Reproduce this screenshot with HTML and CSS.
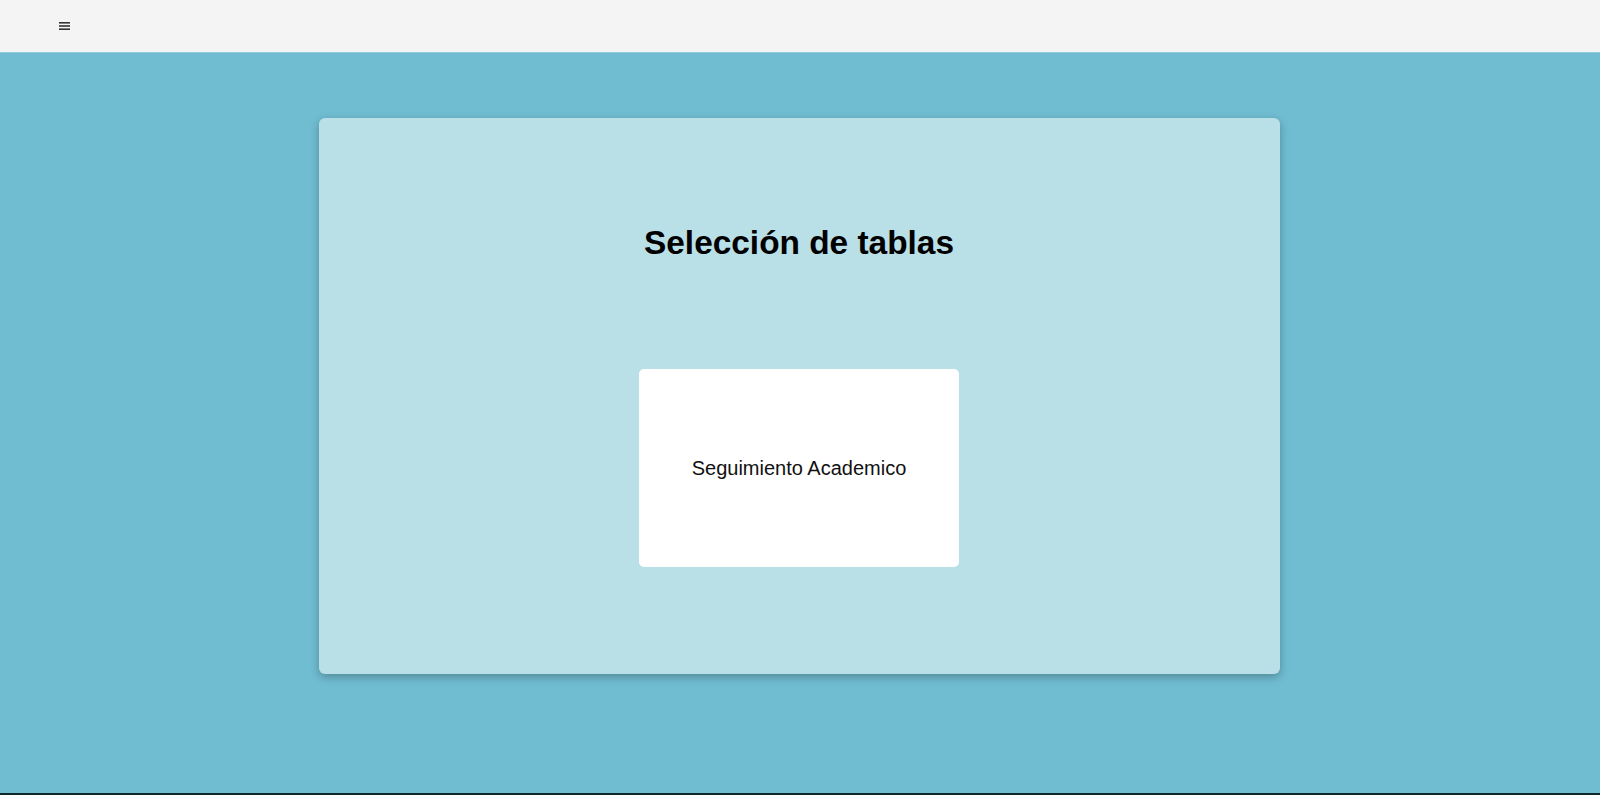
FILE: index.html
```html
<!DOCTYPE html>
<html lang="es">
<head>
<meta charset="utf-8">
<title>Selección de tablas</title>
<link rel="stylesheet" href="styles.css">
</head>
<body>
<div class="page">
  <header class="topbar">
    <button class="menu-btn" aria-label="Menú">
      <svg width="12" height="10" viewBox="0 0 12 10"><rect x="0" y="1" width="11" height="1.6" fill="#333"/><rect x="0" y="4.2" width="11" height="1.6" fill="#333"/><rect x="0" y="7.4" width="11" height="1.6" fill="#333"/></svg>
    </button>
  </header>
  <main class="main">
    <section class="panel">
      <h1 class="panel-title">Selección de tablas</h1>
      <div class="tiles">
        <a class="tile" href="#">Seguimiento Academico</a>
      </div>
    </section>
  </main>
  <div class="taskbar"></div>
</div>
</body>
</html>
```

FILE: styles.css
```css
* { box-sizing: border-box; }
html, body {
  margin: 0;
  padding: 0;
  height: 100%;
  font-family: "Liberation Sans", Arial, sans-serif;
}
.page {
  display: flex;
  flex-direction: column;
  height: 795px;
  background: #70bdd2;
}
.topbar {
  height: 53px;
  background: #f4f4f4;
  display: flex;
  align-items: center;
  padding-left: 59px;
  border-bottom: 1px solid #8ecbdc;
  flex-shrink: 0;
}
.menu-btn {
  border: 0;
  background: transparent;
  padding: 0;
  margin-top: -1px;
  display: flex;
  cursor: pointer;
}
.main {
  flex: 1;
  display: flex;
  justify-content: center;
  align-items: flex-start;
  padding-top: 65px;
  padding-right: 2px;
}
.panel {
  width: 961px;
  height: 556px;
  background: #b9dfe7;
  border-radius: 6px;
  box-shadow: 0 3px 10px rgba(0, 0, 0, 0.28);
  display: flex;
  flex-direction: column;
  align-items: center;
  padding-top: 106px;
}
.panel-title {
  margin: 0;
  font-size: 33.4px;
  font-weight: bold;
  color: #000;
  line-height: 37px;
}
.tiles {
  margin-top: 108px;
  display: flex;
  justify-content: center;
}
.tile {
  width: 320px;
  height: 198px;
  background: #fff;
  border-radius: 5px;
  display: flex;
  align-items: center;
  justify-content: center;
  color: #111;
  font-size: 20px;
  text-decoration: none;
}
.taskbar {
  height: 2px;
  background: #10262b;
  flex-shrink: 0;
}
```
